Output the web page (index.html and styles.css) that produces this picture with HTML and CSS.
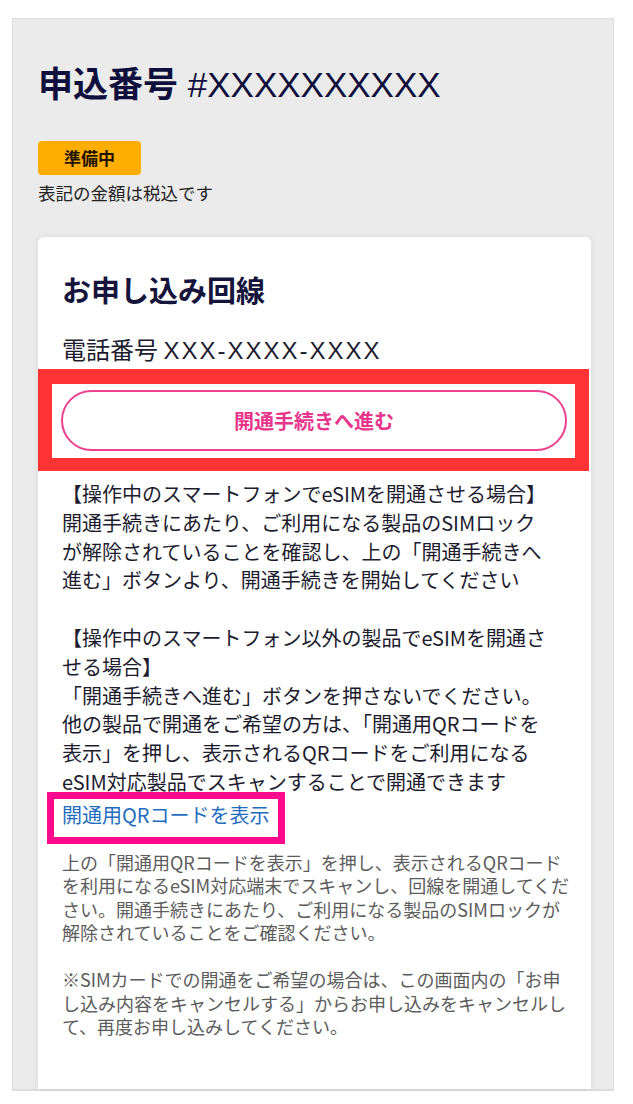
FILE: index.html
```html
<!DOCTYPE html>
<html lang="ja">
<head>
    <meta charset="UTF-8">
    <meta name="viewport" content="width=device-width, initial-scale=1.0">
    <title>申込番号</title>
    <link rel="stylesheet" href="styles.css">
</head>
<body>
    <div class="panel">
        <h1 class="order-title">申込番号 <span class="order-no">#XXXXXXXXXX</span></h1>
        <div class="status">準備中</div>
        <p class="tax-note">表記の金額は税込です</p>

        <div class="card">
            <h2>お申し込み回線</h2>
            <p class="phone">電話番号 <span class="phone-no">XXX‐XXXX‐XXXX</span></p>

            <div class="focus-frame">
                <button type="button" class="open-btn">開通手続きへ進む</button>
            </div>

            <div class="guide">
                <p>【操作中のスマートフォンでeSIMを開通させる場合】<br>開通手続きにあたり、ご利用になる製品のSIMロック<br>が解除されていることを確認し、上の「開通手続きへ<br>進む」ボタンより、開通手続きを開始してください</p>
                <p>【操作中のスマートフォン以外の製品でeSIMを開通さ<br>せる場合】<br>「開通手続きへ進む」ボタンを押さないでください。<br>他の製品で開通をご希望の方は、「開通用QRコードを<br>表示」を押し、表示されるQRコードをご利用になる<br>eSIM対応製品でスキャンすることで開通できます</p>
            </div>

            <div class="qr-frame">
                <a href="#" class="qr-link">開通用QRコードを表示</a>
            </div>

            <div class="note">
                <p>上の「開通用QRコードを表示」を押し、表示されるQRコード<br>を利用になるeSIM対応端末でスキャンし、回線を開通してくだ<br>さい。開通手続きにあたり、ご利用になる製品のSIMロックが<br>解除されていることをご確認ください。</p>
                <p>※SIMカードでの開通をご希望の場合は、この画面内の「お申<br>し込み内容をキャンセルする」からお申し込みをキャンセルし<br>て、再度お申し込みしてください。</p>
            </div>
        </div>
    </div>
</body>
</html>
```

FILE: styles.css
```css
body {
    margin: 0;
    background: #fff;
    font-family: "Noto Sans CJK JP", sans-serif;
    color: #1c1c2e;
}

.panel {
    margin: 18px 19px 0 12px;
    padding: 43px 22px 0 25px;
    background-color: #ebebeb;
    border: 1px solid #dcdcdc;
    border-bottom-width: 2px;
}

.order-title {
    margin: 0;
    font-size: 35px;
    line-height: 46px;
    font-weight: 700;
    color: #0f0f3d;
    font-family: "Liberation Sans", "Noto Sans CJK JP", sans-serif;
}

.order-no {
    font-weight: 400;
}

.status {
    width: fit-content;
    margin-top: 33px;
    padding: 0 26px;
    height: 34px;
    line-height: 34px;
    background-color: #ffad00;
    border-radius: 4px;
    font-size: 17px;
    font-weight: 700;
    color: #1f1400;
}

.tax-note {
    margin: 6px 0 0;
    font-size: 17.5px;
    line-height: 24px;
    color: #222;
}

.card {
    margin-top: 32px;
    padding: 32px 24px 50px;
    background-color: #fff;
    border-radius: 6px 6px 0 0;
    box-shadow: 0 0 6px rgba(0, 0, 0, 0.08);
}

.card h2 {
    margin: 0 0 23px;
    font-size: 29px;
    line-height: 40px;
    font-weight: 700;
    color: #14143c;
}

.phone {
    margin: 0 0 1px;
    font-size: 24px;
    line-height: 34px;
    color: #1c1c2e;
}

.phone-no {
    font-family: "Liberation Sans", "Noto Sans CJK JP", sans-serif;
    letter-spacing: 2px;
}

/* red callout around the button */
.focus-frame {
    margin: 0 -22px 0 -24px;
    padding: 6px 8px 7px 9px;
    border: solid #ff3333;
    border-width: 15px 14px 13px 14px;
    background-color: #fff;
}

.open-btn {
    display: block;
    width: 100%;
    height: 61px;
    background-color: #fff;
    border: 2px solid #ec4190;
    border-radius: 31px;
    color: #e8358c;
    font-family: inherit;
    font-size: 20px;
    font-weight: 700;
    cursor: pointer;
}

.guide {
    margin-top: 9px;
    font-size: 20px;
    line-height: 28.8px;
    white-space: nowrap;
}

.guide p {
    margin: 0;
}

.guide p + p {
    margin-top: 28.8px;
}

/* magenta callout around the QR link */
.qr-frame {
    position: relative;
    width: fit-content;
    margin: -5px 0 0 -15px;
    padding: 1px 8px 8px 8px;
    border: 7px solid #ff0a8c;
    background-color: #fff;
}

.qr-link {
    font-size: 20px;
    line-height: 29px;
    color: #1f6dc0;
    text-decoration: none;
}

.note {
    margin-top: 7px;
    font-size: 18px;
    line-height: 23.4px;
    color: #5c5c5c;
    white-space: nowrap;
}

.note p {
    margin: 0;
}

.note p + p {
    margin-top: 24px;
}
```
